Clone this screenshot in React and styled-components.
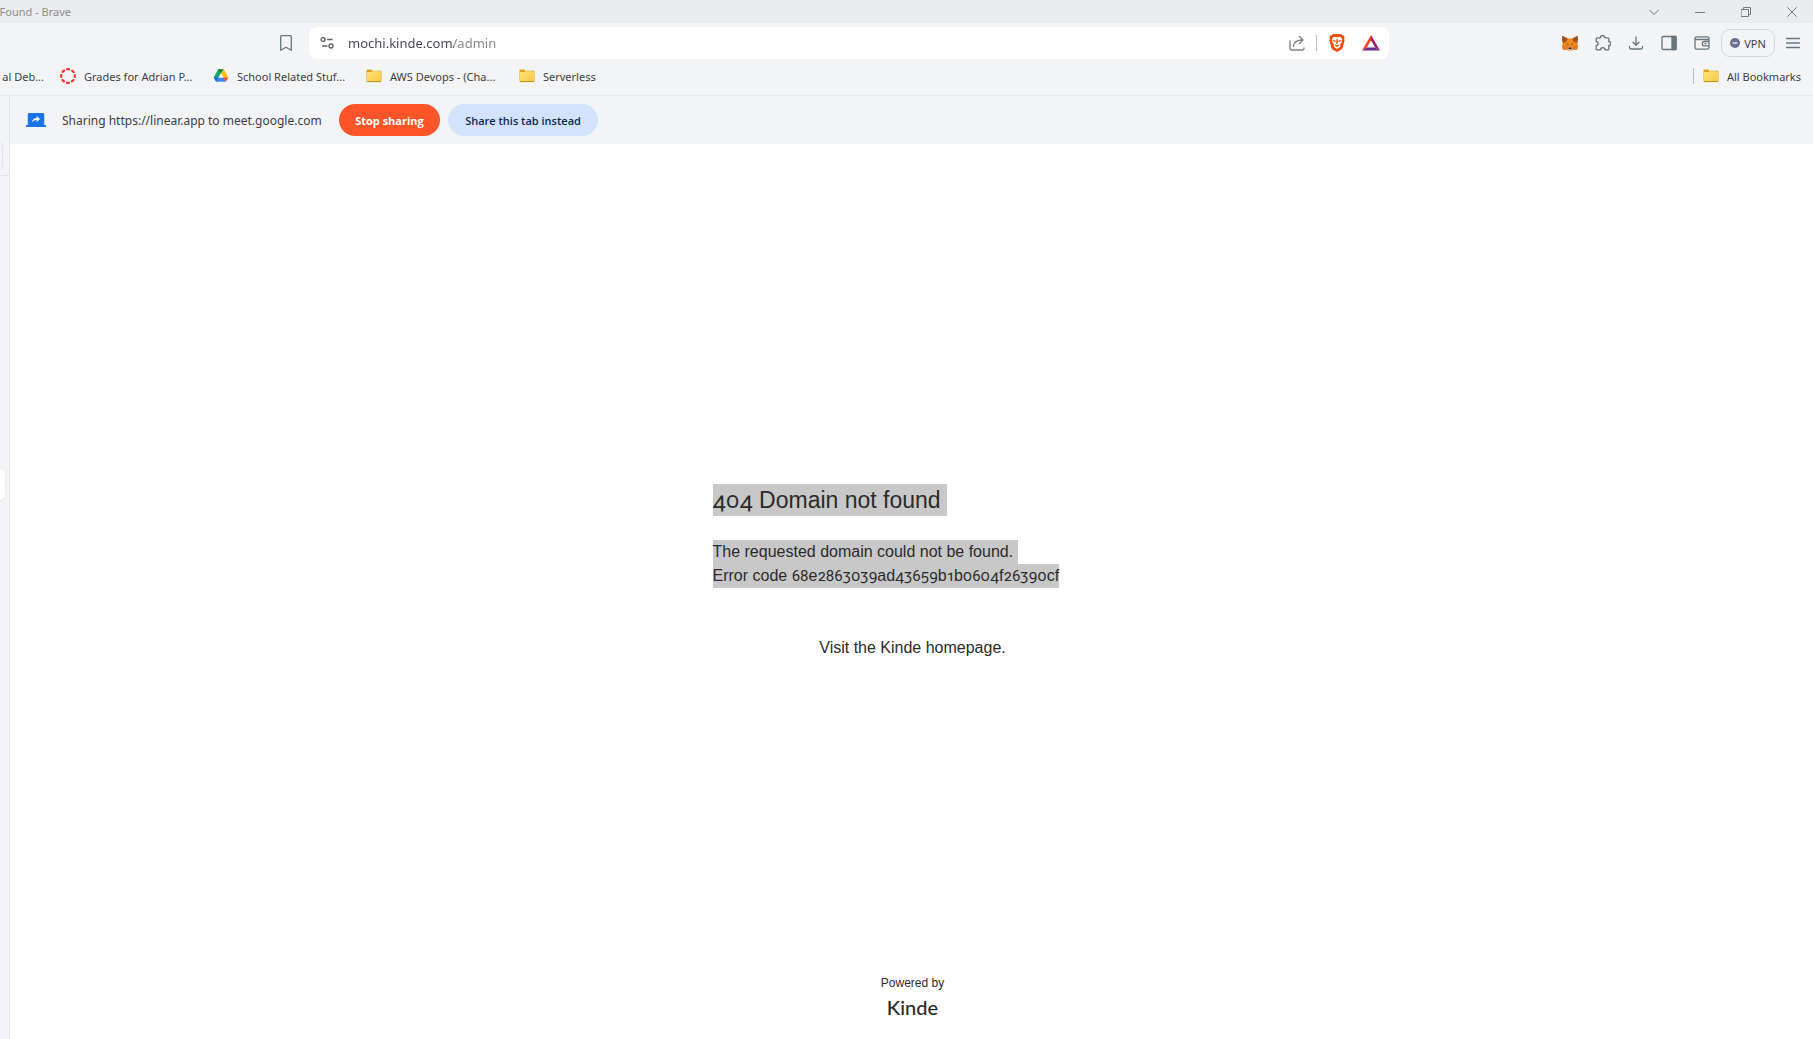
/**
 *
 * App
 *
 */

import React from 'react';
import styled, { createGlobalStyle } from 'styled-components';

const GlobalStyle = createGlobalStyle`
  * {
    box-sizing: border-box;
  }
  body {
    margin: 0;
    background: #fff;
    color: #3b3e44;
    font-family: 'Noto Sans', 'Open Sans', sans-serif;
    font-size: 11px;
  }
  button,
  input {
    font: inherit;
    color: inherit;
    border: 0;
    padding: 0;
    background: none;
  }
  a {
    color: inherit;
    text-decoration: none;
  }
  svg {
    display: block;
    flex: none;
  }
`;

const Window = styled.div`
  display: flex;
  flex-direction: column;
  min-height: 100vh;
  background: #f3f4f6;
`;

const TitleBar = styled.header`
  display: flex;
  justify-content: space-between;
  align-items: center;
  height: 23px;
  padding-right: 16px;
  background: #ebecf0;
  color: #8b8d91;
`;

const WindowTitle = styled.div`
  display: flex;
  justify-content: flex-end;
  width: 71px;
  overflow: hidden;
  white-space: nowrap;
`;

const WindowControls = styled.div`
  display: flex;
  gap: 36px;
`;

const IconButton = styled.button`
  display: flex;
  align-items: center;
  justify-content: center;
  flex: none;
  width: ${props => props.$size || 16}px;
  height: ${props => props.$size || 16}px;
  color: ${props => props.$color || '#66757f'};
`;

const Toolbar = styled.div`
  display: flex;
  align-items: center;
  padding: 4px 12px 4px 0;
`;

const ToolbarStart = styled.div`
  display: flex;
  justify-content: flex-end;
  width: 309px;
  padding-right: 15px;
`;

const AddressBar = styled.form`
  display: flex;
  flex: 1;
  align-items: center;
  height: 32px;
  padding: 0 9px 0 10px;
  border-radius: 8px;
  background: #fff;
`;

const AddressInput = styled.input`
  flex: 1;
  height: 32px;
  margin-left: 13px;
  outline: none;
  font-size: 13px;
  color: transparent;
  background: linear-gradient(90deg, #42454a 106px, #84878b 106px);
  background-clip: text;
`;

const AddressActions = styled.div`
  display: flex;
  align-items: center;
  gap: 11px;
`;

const BraveActions = styled.div`
  display: flex;
  gap: 16px;
`;

const Separator = styled.span`
  width: 1px;
  height: 16px;
  background: #b9bcc0;
`;

const ToolbarEnd = styled.div`
  display: flex;
  align-items: center;
  justify-content: flex-end;
  gap: 17px;
  width: 412px;
`;

const ToolbarMenu = styled.div`
  display: flex;
  align-items: center;
  gap: 10px;
`;

const VpnButton = styled.button`
  display: flex;
  align-items: center;
  justify-content: center;
  gap: 4px;
  width: 54px;
  height: 28px;
  margin-left: -6px;
  border: 1px solid #d3d7db;
  border-radius: 9px;
`;

const BookmarksBar = styled.nav`
  display: flex;
  align-items: center;
  justify-content: space-between;
  height: 33px;
  padding: 0 12px 6px 0;
  border-bottom: 1px solid #e8e9ec;
`;

const BookmarkList = styled.div`
  display: flex;
  align-items: center;
  gap: 16px;
`;

const Bookmark = styled.a`
  display: flex;
  align-items: center;
  gap: 8px;
  height: 24px;
  white-space: nowrap;
`;

const BookmarkLabel = styled.span`
  width: ${props => (props.$wide ? '113px' : 'auto')};
`;

const ClippedBookmark = styled.a`
  display: flex;
  justify-content: flex-end;
  width: 44px;
  overflow: hidden;
  white-space: nowrap;
`;

const AllBookmarks = styled.div`
  display: flex;
  align-items: center;
  gap: 9px;
`;

const Body = styled.div`
  display: flex;
  flex: 1;
`;

const Sidebar = styled.aside`
  display: flex;
  flex-direction: column;
  width: 10px;
  border-right: 1px solid #e2e4e8;
`;

const SidebarTop = styled.div`
  height: 80px;
  padding-top: 47px;
  border-bottom: 1px solid #e2e4e8;
`;

const SidebarTab = styled.div`
  width: 3px;
  height: 26px;
  border: 1px solid #e2e4e8;
  border-left: 0;
  border-radius: 0 4px 4px 0;
`;

const SidebarHandle = styled.div`
  width: 5px;
  height: 31px;
  margin-top: 293px;
  border-radius: 0 5px 5px 0;
  background: #fff;
  box-shadow: 0 1px 2px rgba(0, 0, 0, 0.08);
`;

const Content = styled.div`
  display: flex;
  flex: 1;
  flex-direction: column;
`;

const SharingBar = styled.div`
  display: flex;
  align-items: center;
  height: 48px;
  padding-left: 16px;
`;

const SharingText = styled.span`
  width: 265px;
  margin: 0 12px 0 16px;
  font-size: 12px;
  white-space: nowrap;
`;

const PillButton = styled.button`
  height: 32px;
  width: ${props => (props.$primary ? 101 : 150)}px;
  margin-right: 8px;
  border-radius: 16px;
  background: ${props => (props.$primary ? '#fd5529' : '#d3e3fd')};
  color: ${props => (props.$primary ? '#fff' : '#0a2a50')};
  font-family: 'Open Sans', sans-serif;
  font-weight: ${props => (props.$primary ? 700 : 600)};
`;

const Page = styled.main`
  display: flex;
  flex: 1;
  flex-direction: column;
  align-items: center;
  padding-left: 2px;
  background: #fff;
  color: #2b2b2b;
  font-family: 'Liberation Sans', Arial, sans-serif;
  font-size: 16px;
  line-height: 24px;
`;

const ErrorBlock = styled.section`
  display: flex;
  flex: 1;
  flex-direction: column;
  justify-content: center;
  width: 400px;
  max-width: 100%;
  padding-top: 28px;
`;

const Heading = styled.h1`
  margin: 0 0 24px;
  font-size: 23px;
  font-weight: 400;
  line-height: 32px;
`;

const Message = styled.p`
  margin: 0 0 48px;
`;

const Selected = styled.span`
  display: inline-block;
  height: ${props => props.$height || 24}px;
  padding-right: ${props => props.$trail || 0}px;
  background: #c8c8c8;
  vertical-align: top;
`;

const Digits = styled.span`
  font-family: Roboto, sans-serif;
  font-size: ${props => props.$size || 15}px;
  font-variant-numeric: oldstyle-nums proportional-nums;
`;

const HomeLink = styled.a`
  align-self: center;
`;

const Footer = styled.footer`
  display: flex;
  flex-direction: column;
  align-items: center;
  padding-bottom: 20px;
  font-size: 12px;
`;

const Brand = styled.a`
  font-family: Lato, sans-serif;
  font-size: 20px;
  font-weight: 500;
`;

const Line = ({ size = 16, width = 1.3, children }) => (
  <svg
    width={size}
    height={size}
    viewBox={`0 0 ${size} ${size}`}
    fill="none"
    stroke="currentColor"
    strokeWidth={width}
    strokeLinecap="round"
    strokeLinejoin="round"
    aria-hidden="true"
  >
    {children}
  </svg>
);

const FolderIcon = () => (
  <svg width="16" height="16" viewBox="0 0 16 16" aria-hidden="true">
    <defs>
      <linearGradient id="folder" x1="0" y1="0" x2="1" y2="1">
        <stop offset="0" stopColor="#ffe580" />
        <stop offset="1" stopColor="#fbc93d" />
      </linearGradient>
    </defs>
    <path d="M.5 2.5q0-1 1-1h3.8l1.2 1.3h8q1 0 1 1V13q0 1-1 1h-13q-1 0-1-1z" fill="#d9a520" />
    <path d="M1 5q0-.9.9-.9h3.4l1.2-.8h7.6q.9 0 .9.9v8.2q0 .8-.8.8H1.8q-.8 0-.8-.8z" fill="url(#folder)" />
    <path d="M1 13.6h14" stroke="#b8891c" strokeWidth=".8" />
  </svg>
);

const CanvasIcon = () => (
  <svg width="16" height="16" viewBox="0 0 16 16" aria-hidden="true">
    <circle cx="8" cy="8" r="6.8" fill="none" stroke="#e23b2e" strokeWidth="2.2" strokeDasharray="3.9 1.44" strokeDashoffset="1.95" />
  </svg>
);

const DriveIcon = () => (
  <svg width="16" height="16" viewBox="0 0 16 16" aria-hidden="true">
    <path d="M5.2 1.2h2.8l2.4 4-2.4 0-4.8 8.6L.7 9.4z" fill="#1fa463" />
    <path d="M5.2 1.2h5.6L8 5.6z" fill="#188038" />
    <path d="M10.8 1.2l4.5 8.2h-4.8L8 5.3z" fill="#fbbc04" />
    <path d="M.7 9.4h4.8L3.2 13.8z" fill="#1967d2" />
    <path d="M5.3 9.4h5.3l2.2 4.4H3.2z" fill="#4285f4" />
    <path d="M8 5.4l2.4 4H5.6z" fill="#fff" />
    <path d="M10.5 9.4h4.8l-2.5 4.4z" fill="#ea4335" />
  </svg>
);

const BraveIcon = () => (
  <svg width="16" height="18" viewBox="0 0 16 18" aria-hidden="true">
    <path d="M4 0h8l1.5 1.6 1.3-.1.8 2.2-.5 1.4.5 1.5-1.9 7q-.3 1.2-1.3 1.9L8 18l-4.4-2.5q-1-.7-1.3-1.9l-1.9-7 .5-1.5-.5-1.4.8-2.2 1.3.1z" fill="#fb4b09" />
    <path d="M4.7 2.7l3.3.6 3.3-.6 2 2.6-.8 1.8.4 1.2-2 2.5.5 1.2-.9 1.3L8 15.1l-2.5-1.8-.9-1.3.5-1.2-2-2.5.4-1.2-.8-1.8z" fill="#fff" />
    <path d="M4.2 5.9l2.7.9-.7 1.2-1.7-.5zM11.8 5.9l-2.7.9.7 1.2 1.7-.5zM7.5 4.8h1l.4 4.4-.9.9-.9-.9zM5.6 10.4L8 11.3l2.4-.9-.5 1.3L8 12.9l-1.9-1.2z" fill="#fb4b09" />
  </svg>
);

const BatIcon = () => (
  <svg width="18" height="16" viewBox="0 0 18 16" aria-hidden="true">
    <path d="M9 0v5.2L4.9 12.4 0 15.6z" fill="#ff4724" />
    <path d="M9 0l9 15.6-4.9-3.2L9 5.2z" fill="#9e1f63" />
    <path d="M0 15.6l4.9-3.2h8.2l4.9 3.2z" fill="#662d91" />
  </svg>
);

const FoxIcon = () => (
  <svg width="16" height="16" viewBox="0 0 16 16" aria-hidden="true">
    <path d="M.4.8l5.2 2.8h4.8L15.6.8l.4 4.2-.8 3 .8 3-1.2 4-3.2-.4-1.8 1H6.2l-1.8-1-3.2.4L0 11l.8-3L0 5z" fill="#f6851b" />
    <path d="M.4.8l5.2 2.8-1 2.8L.9 8 0 5zM15.6.8l-5.2 2.8 1 2.8L15.1 8l.9-3z" fill="#9c5424" />
    <path d="M0 11h4.6l1.2 1.4-1.3 2.2-3.3.4zM16 11h-4.6l-1.2 1.4 1.3 2.2 3.3.4z" fill="#e27625" />
    <path d="M4.2 8.3l2.2.7-.2 1zM11.8 8.3l-2.2.7.2 1z" fill="#233447" />
    <path d="M6.4 12.2h3.2l.4 2.6-.5.7h-3l-.5-.7z" fill="#c9b8aa" />
    <path d="M6.8 12.4h2.4l.2 1.5H6.6z" fill="#161616" />
  </svg>
);

const PresentIcon = () => (
  <svg width="20" height="16" viewBox="0 0 20 16" aria-hidden="true">
    <path d="M3.2 1h13.6q1.4 0 1.4 1.4v9.8q0 .9-.8.9H20V15H0v-1.9h2.6q-.8 0-.8-.9V2.4Q1.8 1 3.2 1z" fill="#1a73e8" />
    <path d="M6 10.2q.6-3.9 4.7-4.2V3.9L14 7l-3.3 3.1V8.1Q7.8 8 6 10.2z" fill="#fff" />
  </svg>
);

const bookmarks = [
  { label: 'Grades for Adrian P...', icon: CanvasIcon, wide: true },
  { label: 'School Related Stuf...', icon: DriveIcon, wide: true },
  { label: 'AWS Devops - (Cha...', icon: FolderIcon, wide: true },
  { label: 'Serverless', icon: FolderIcon, wide: false },
];

const errorCode = '68e2863039ad43659b1b0604f26390cf';

// Old-style figures sit among plain letters, so split the code into runs.
const renderCode = code =>
  code.match(/\d+|\D+/g).map((run, i) => (/\d/.test(run) ? <Digits key={i}>{run}</Digits> : run));

const BrowserTitle = () => (
  <TitleBar>
    <WindowTitle>Found - Brave</WindowTitle>
    <WindowControls>
      <IconButton $size={10} $color="#77797d" aria-label="Search tabs">
        <Line size={10} width={1}><path d="M.5 3L5 7.5 9.5 3" /></Line>
      </IconButton>
      <IconButton $size={10} $color="#77797d" aria-label="Minimize">
        <Line size={10} width={1}><path d="M.5 5.5h9" /></Line>
      </IconButton>
      <IconButton $size={10} $color="#77797d" aria-label="Restore">
        <Line size={10} width={1}>
          <path d="M.5 2.5h7v7h-7zM2.5 2.5v-2h7v7h-2" />
        </Line>
      </IconButton>
      <IconButton $size={10} $color="#77797d" aria-label="Close">
        <Line size={10} width={1}><path d="M.5.5l9 9M9.5.5l-9 9" /></Line>
      </IconButton>
    </WindowControls>
  </TitleBar>
);

const BrowserToolbar = () => (
  <Toolbar>
    <ToolbarStart>
      <IconButton aria-label="Bookmark this tab">
        <Line><path d="M2.7 1.7q0-1 1-1h8.6q1 0 1 1v13.6L8 12.3l-5.3 3z" /></Line>
      </IconButton>
    </ToolbarStart>
    <AddressBar onSubmit={e => e.preventDefault()}>
      <IconButton type="button" $color="#5f6368" aria-label="View site information">
        <Line>
          <circle cx="4" cy="4.5" r="2" />
          <path d="M8.5 4.5H13M3.5 11H8" />
          <circle cx="12" cy="11" r="2" />
        </Line>
      </IconButton>
      <AddressInput aria-label="Address" defaultValue="mochi.kinde.com/admin" />
      <AddressActions>
        <IconButton type="button" $color="#7c7f83" aria-label="Share">
          <Line>
            <path d="M1 6v7.5Q1 15 2.5 15h11q1.5 0 1.5-1.500V13M4.500 11.500Q4.500 5 14 5M10.500 1.500L14 5l-3.500 3.500" />
          </Line>
        </IconButton>
        <Separator />
        <BraveActions>
          <IconButton type="button" $size={18} aria-label="Brave Shields"><BraveIcon /></IconButton>
          <IconButton type="button" $size={18} aria-label="Brave Rewards"><BatIcon /></IconButton>
        </BraveActions>
      </AddressActions>
    </AddressBar>
    <ToolbarEnd>
      <IconButton aria-label="MetaMask"><FoxIcon /></IconButton>
      <IconButton aria-label="Extensions">
        <Line>
          <path d="M1.200 3.700q0-.9.900-.9h3.200a2.300 2.300 0 0 1 4.600 0h3q.9 0 .9.900v2.800a2.100 2.100 0 0 1 0 4.200v3.200q0 .9-.9.900H10a2 2 0 0 0-4.400 0H2.100q-.9 0-.9-.9v-3.300a2 2 0 0 0 0-4z" />
        </Line>
      </IconButton>
      <IconButton aria-label="Downloads">
        <Line><path d="M8 2v8M5 7.3l3 2.900 3-2.900M1.500 11.500v1q0 1.500 1.500 1.500h10q1.500 0 1.500-1.500v-1" /></Line>
      </IconButton>
      <IconButton aria-label="Show sidebar">
        <Line>
          <rect x="1" y="1.5" width="14" height="13" rx="1" />
          <path d="M11 1.5h4v13h-4z" fill="currentColor" />
        </Line>
      </IconButton>
      <IconButton aria-label="Wallet">
        <Line>
          <path d="M15 5V3.5q0-1.700-1.700-1.700H2.700Q1 1.800 1 3.500v9q0 1.700 1.700 1.700h10.600q1.700 0 1.700-1.700V4.500H1M15 6.500h-4.500a2.200 2.200 0 0 0 0 4.400H15M11 8.700h1" />
        </Line>
      </IconButton>
      <ToolbarMenu>
        <VpnButton>
          <svg width="10" height="10" viewBox="0 0 10 10" aria-hidden="true">
            <circle cx="5" cy="5" r="5" fill="#6b6f92" />
            <path d="M2.5 5h5" stroke="#f3f4f6" strokeWidth="1.3" />
          </svg>
          VPN
        </VpnButton>
        <IconButton aria-label="Menu">
          <Line><path d="M1.5 3.5h13M1.500 8h13M1.500 12.500h13" /></Line>
        </IconButton>
      </ToolbarMenu>
    </ToolbarEnd>
  </Toolbar>
);

const Bookmarks = () => (
  <BookmarksBar aria-label="Bookmarks">
    <BookmarkList>
      <ClippedBookmark href="#">al Deb...</ClippedBookmark>
      {bookmarks.map(({ label, icon: Icon, wide }) => (
        <Bookmark key={label} href="#">
          <Icon />
          <BookmarkLabel $wide={wide}>{label}</BookmarkLabel>
        </Bookmark>
      ))}
    </BookmarkList>
    <AllBookmarks>
      <Separator />
      <Bookmark href="#">
        <FolderIcon />
        <BookmarkLabel>All Bookmarks</BookmarkLabel>
      </Bookmark>
    </AllBookmarks>
  </BookmarksBar>
);

const App = () => (
  <Window>
    <GlobalStyle />
    <BrowserTitle />
    <BrowserToolbar />
    <Bookmarks />
    <Body>
      <Sidebar>
        <SidebarTop>
          <SidebarTab />
        </SidebarTop>
        <SidebarHandle />
      </Sidebar>
      <Content>
        <SharingBar>
          <PresentIcon />
          <SharingText>Sharing https://linear.app to meet.google.com</SharingText>
          <PillButton $primary>Stop sharing</PillButton>
          <PillButton>Share this tab instead</PillButton>
        </SharingBar>
        <Page>
          <ErrorBlock>
            <Heading>
              <Selected $height={32} $trail={6}>
                <Digits $size={22}>404</Digits> Domain not found
              </Selected>
            </Heading>
            <Message>
              <Selected $trail={5}>The requested domain could not be found.</Selected>
              <br />
              <Selected>Error code {renderCode(errorCode)}</Selected>
            </Message>
            <HomeLink href="#">Visit the Kinde homepage.</HomeLink>
          </ErrorBlock>
          <Footer>
            Powered by
            <Brand href="#">Kinde</Brand>
          </Footer>
        </Page>
      </Content>
    </Body>
  </Window>
);

export default App;
